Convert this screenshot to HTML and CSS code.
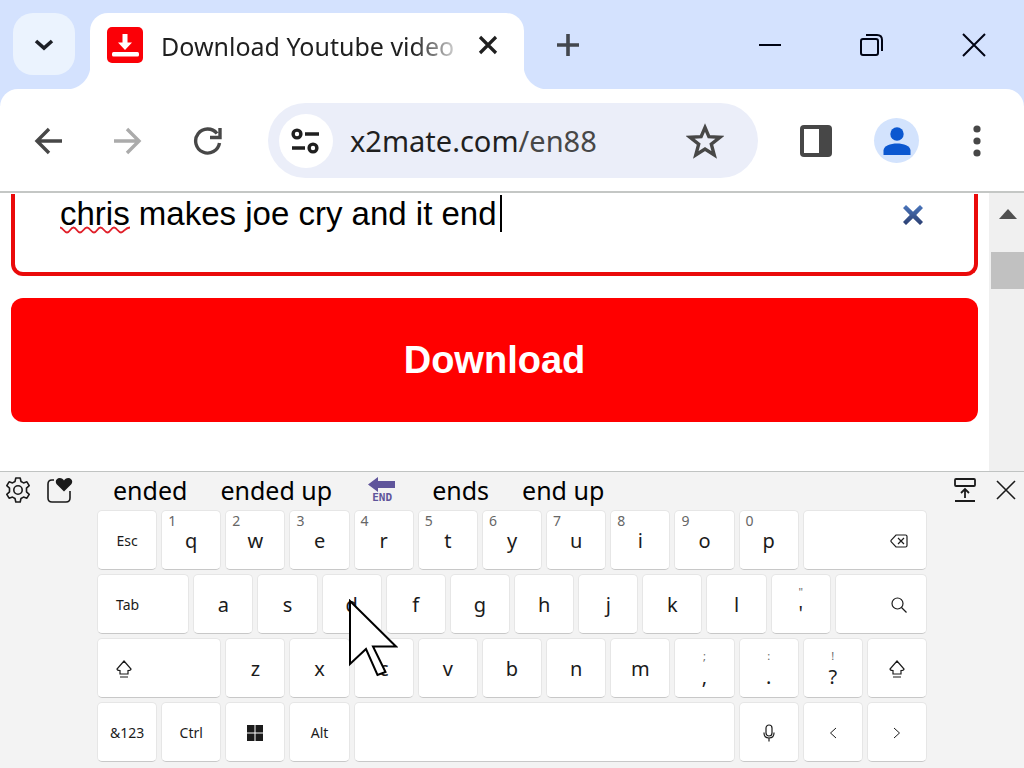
FILE: index.html
```html
<!DOCTYPE html>
<html lang="en">
<head>
<meta charset="utf-8">
<meta name="viewport" content="width=device-width, initial-scale=1">
<title>Download Youtube video</title>
<link rel="stylesheet" href="styles.css">
</head>
<body>
<div class="screen">
  <header class="tabstrip">
    <button class="tab-search" aria-label="Search tabs"><svg width="22" height="22" viewBox="0 0 22 22"><path d="M3 8l8 7 8-7" fill="none" stroke="#1c1f26" stroke-width="3.600"/></svg></button>
    <div class="tab">
      <svg class="favicon" width="36" height="36" viewBox="0 0 36 36"><rect width="36" height="36" rx="5" fill="#fb0007"/><path d="M15.500 7h5v8.500h4.500l-7 7.500-7-7.500h4.500z" fill="#fff"/><rect x="5" y="25" width="27" height="4.500" rx="1.500" fill="#fff"/></svg>
      <span class="tab-title">Download Youtube video</span>
      <button class="icon-btn" aria-label="Close tab"><svg width="20" height="20" viewBox="0 0 20 20"><path d="M2 2l16 16M18 2L2 18" stroke="#1f1f1f" stroke-width="3.200"/></svg></button>
    </div>
    <button class="icon-btn new-tab" aria-label="New tab"><svg width="24" height="24" viewBox="0 0 24 24"><path d="M12 1v22M1 12h22" stroke="#43474e" stroke-width="3.600"/></svg></button>
    <div class="window-controls">
      <button class="icon-btn" aria-label="Minimize"><svg width="24" height="24" viewBox="0 0 24 24"><path d="M1 12h22" stroke="#000414" stroke-width="2"/></svg></button>
      <button class="icon-btn" aria-label="Restore"><svg width="24" height="24" viewBox="0 0 24 24" fill="none" stroke="#000414" stroke-width="2"><rect x="1" y="6" width="17" height="16" rx="2"/><path d="M6 2h11q5 0 5 5v11"/></svg></button>
      <button class="icon-btn" aria-label="Close"><svg width="24" height="24" viewBox="0 0 24 24"><path d="M1 1l22 22M23 1L1 23" stroke="#000414" stroke-width="2"/></svg></button>
    </div>
  </header>

  <nav class="toolbar">
    <div class="nav-buttons">
      <button class="icon-btn" aria-label="Back"><svg width="30" height="28" viewBox="0 0 30 28"><path d="M29 14H4M16 2L4 14l12 12" fill="none" stroke="#474747" stroke-width="3.400"/></svg></button>
      <button class="icon-btn" aria-label="Forward"><svg width="30" height="28" viewBox="0 0 30 28"><path d="M1 14h25M14 2l12 12-12 12" fill="none" stroke="#ababab" stroke-width="3.400"/></svg></button>
      <button class="icon-btn" aria-label="Reload"><svg width="30" height="30" viewBox="0 0 30 30"><path d="M26.500 17a12 12 0 1 1-2.500-9.500M27 2v9.500h-10" fill="none" stroke="#474747" stroke-width="3.400"/></svg></button>
    </div>
    <div class="omnibox">
      <button class="site-info" aria-label="Site information"><svg width="30" height="28" viewBox="0 0 30 28" fill="none" stroke="#1f1f1f" stroke-width="3.400"><circle cx="6" cy="7" r="3.900"/><path d="M14 7h14M1 21h13"/><circle cx="22" cy="21" r="3.900"/></svg></button>
      <span class="url" role="textbox" aria-label="Address">x2mate.com<span class="url-path">/en88</span></span>
      <button class="icon-btn" aria-label="Bookmark"><svg width="38" height="38" viewBox="0 0 38 38"><path d="M19 5.500l3.900 9.200 11 .6-8.600 6.900 2.900 10.700L19 27l-9.200 5.900 2.900-10.700-8.600-6.900 11-.6z" fill="none" stroke="#474747" stroke-width="3.400"/></svg></button>
    </div>
    <div class="tool-actions">
      <button class="icon-btn" aria-label="Side panel"><svg width="32" height="32" viewBox="0 0 32 32"><rect width="32" height="32" rx="4" fill="#474747"/><path d="M4 4h15v24H4z" fill="#fff"/></svg></button>
      <button class="avatar" aria-label="Profile"><svg width="28" height="28" viewBox="0 0 28 28" fill="#0b57d0"><circle cx="14" cy="7" r="6.700"/><path d="M0.500 28v-4.500c0-4.500 7-7 13.500-7s13.500 2.500 13.500 7V28z"/></svg></button>
      <button class="icon-btn" aria-label="Menu"><svg width="8" height="32" viewBox="0 0 8 32" fill="#474747"><circle cx="4" cy="4" r="3.600"/><circle cx="4" cy="16" r="3.600"/><circle cx="4" cy="28" r="3.600"/></svg></button>
    </div>
  </nav>

  <div class="viewport">
    <main class="page">
      <div class="field">
        <input class="query" type="text" aria-label="Search or paste link" value="chris makes joe cry and it end" spellcheck="false">
        <svg class="squiggle" width="70" height="8" viewBox="0 0 70 8"><path d="M0 1.500C3 1.500 4 6.500 7 6.500S10.500 1.500 13.500 1.500 17 6.500 20 6.500 24 1.500 27 1.500 31 6.500 34 6.500 37.500 1.500 40.500 1.500 44.500 6.500 47.500 6.500 51 1.500 54 1.500 58 6.500 61 6.500 65 1.500 70 1.500" fill="none" stroke="#e0202a" stroke-width="1.800"/></svg>
        <span class="caret"></span>
        <button class="icon-btn" aria-label="Clear"><svg width="20" height="20" viewBox="0 0 20 20"><defs><linearGradient id="clear" x1="0" y1="0" x2="0" y2="1"><stop offset="0" stop-color="#4a76bd"/><stop offset="1" stop-color="#2b3e70"/></linearGradient></defs><path d="M3 0l7 6.800L17 0l3 3-6.800 7 6.800 7-3 3-7-6.800L3 20l-3-3 6.800-7L0 3z" fill="url(#clear)"/></svg></button>
      </div>
      <button class="download">Download</button>
    </main>
    <div class="scrollbar">
      <svg width="18" height="10" viewBox="0 0 18 10"><path d="M0 10L9 0l9 10z" fill="#505050"/></svg>
      <div class="thumb"></div>
    </div>
  </div>

  <section class="keyboard" aria-label="Touch keyboard">
    <div class="suggest-bar">
      <div class="kb-tools">
        <button class="icon-btn" aria-label="Settings"><svg width="26" height="26" viewBox="0 0 26 26" fill="none" stroke="#1b1b1b" stroke-width="1.600" stroke-linejoin="round"><path d="M10.800 1h4.400l.8 3.500 2.500 1.400 3.400-1.100 2.300 3.900-2.700 2.500v3.600l2.700 2.500-2.300 3.900-3.400-1.100-2.500 1.400-.8 3.500h-4.400L10 21.500l-2.500-1.400-3.400 1.100-2.300-3.900 2.700-2.500v-3.600L1.800 8.700l2.300-3.900 3.400 1.100L10 4.500z"/><circle cx="13" cy="13" r="4.200"/></svg></button>
        <button class="icon-btn" aria-label="Emoji and stickers"><svg width="26" height="26" viewBox="0 0 26 26"><path d="M7 3H5Q1 3 1 7v14q0 4 4 4h14q4 0 4-4v-7" fill="none" stroke="#1b1b1b" stroke-width="1.600"/><path d="M17 14.500L9.700 7.300C7.500 4.500 9.500 1 12.700 1c2 0 3.500 1 4.300 2.600C17.800 2 19.300 1 21.300 1c3.200 0 5.200 3.500 3 6.300z" fill="#1b1b1b"/></svg></button>
      </div>
      <div class="suggestions">
        <button class="word">ended</button>
        <button class="word">ended up</button>
        <button class="word end-emoji" aria-label="End arrow"><svg width="28" height="15" viewBox="0 0 28 15"><path d="M0 7.500L10 0v4h17v7H10v4z" fill="#5f559b"/></svg><span>END</span></button>
        <button class="word">ends</button>
        <button class="word">end up</button>
      </div>
      <div class="kb-window">
        <button class="icon-btn" aria-label="Dock keyboard"><svg width="22" height="24" viewBox="0 0 22 24" fill="none" stroke="#1b1b1b" stroke-width="1.800"><rect x="1" y="1" width="20" height="7" rx="1"/><path d="M11 20v-9M7 15l4-4 4 4M1 23h20"/></svg></button>
        <button class="icon-btn" aria-label="Close keyboard"><svg width="20" height="20" viewBox="0 0 20 20"><path d="M1 1l18 18M19 1L1 19" stroke="#1b1b1b" stroke-width="1.600"/></svg></button>
      </div>
    </div>

    <div class="keys">
      <button class="key small">Esc</button>
      <button class="key"><span class="alt">1</span>q</button>
      <button class="key"><span class="alt">2</span>w</button>
      <button class="key"><span class="alt">3</span>e</button>
      <button class="key"><span class="alt">4</span>r</button>
      <button class="key"><span class="alt">5</span>t</button>
      <button class="key"><span class="alt">6</span>y</button>
      <button class="key"><span class="alt">7</span>u</button>
      <button class="key"><span class="alt">8</span>i</button>
      <button class="key"><span class="alt">9</span>o</button>
      <button class="key"><span class="alt">0</span>p</button>
      <button class="key wide-4 right" aria-label="Backspace"><svg width="18" height="14" viewBox="0 0 18 14" fill="none" stroke="#1b1b1b" stroke-width="1.200"><path d="M6 1h9.500Q17 1 17 2.500v9q0 1.500-1.500 1.500H6L1 7.600V6.400zM8 4l6 6M14 4l-6 6"/></svg></button>

      <button class="key wide-3 small left">Tab</button>
      <button class="key">a</button>
      <button class="key">s</button>
      <button class="key">d</button>
      <button class="key">f</button>
      <button class="key">g</button>
      <button class="key">h</button>
      <button class="key">j</button>
      <button class="key">k</button>
      <button class="key">l</button>
      <button class="key stacked"><span class="upper">"</span><span>'</span></button>
      <button class="key wide-3 right" aria-label="Search"><svg width="18" height="16" viewBox="0 0 18 16" fill="none" stroke="#1b1b1b" stroke-width="1.200"><circle cx="7.500" cy="6.500" r="5.500"/><path d="M11.500 10.500l5 5"/></svg></button>

      <button class="key wide-4 left" aria-label="Shift"><svg width="16" height="18" viewBox="0 0 16 18" fill="none" stroke="#1b1b1b" stroke-width="1.200"><path d="M8 1l7 8q0 1.500-3 1.500V14H4v-3.500Q1 10.500 1 9zM4 17h8"/></svg></button>
      <button class="key">z</button>
      <button class="key">x</button>
      <button class="key">c</button>
      <button class="key">v</button>
      <button class="key">b</button>
      <button class="key">n</button>
      <button class="key">m</button>
      <button class="key stacked"><span class="upper">;</span><span>,</span></button>
      <button class="key stacked"><span class="upper">:</span><span>.</span></button>
      <button class="key stacked"><span class="upper">!</span><span>?</span></button>
      <button class="key" aria-label="Right shift"><svg width="16" height="18" viewBox="0 0 16 18" fill="none" stroke="#1b1b1b" stroke-width="1.200"><path d="M8 1l7 8q0 1.500-3 1.500V14H4v-3.500Q1 10.500 1 9zM4 17h8"/></svg></button>

      <button class="key small">&amp;123</button>
      <button class="key small">Ctrl</button>
      <button class="key" aria-label="Windows"><svg width="16" height="16" viewBox="0 0 16 16"><path d="M0 0h7.500v7.500H0zM8.500 0H16v7.500H8.500zM0 8.500h7.500V16H0zM8.500 8.500H16V16H8.500z" fill="#1b1b1b"/></svg></button>
      <button class="key small">Alt</button>
      <button class="key wide-12" aria-label="Space"></button>
      <button class="key" aria-label="Dictate"><svg width="12" height="18" viewBox="0 0 12 18" fill="none" stroke="#1b1b1b" stroke-width="1.200"><rect x="3" y="1" width="6" height="11" rx="3"/><path d="M1 8.500v.5q0 5 5 5t5-5v-.5M6 14v3.500"/></svg></button>
      <button class="key" aria-label="Left"><svg width="8" height="12" viewBox="0 0 8 12"><path d="M7 1L1.500 6 7 11" fill="none" stroke="#1b1b1b" stroke-width="1"/></svg></button>
      <button class="key" aria-label="Right"><svg width="8" height="12" viewBox="0 0 8 12"><path d="M1 1l5.500 5L1 11" fill="none" stroke="#1b1b1b" stroke-width="1"/></svg></button>
    </div>
  </section>

  <svg class="pointer" width="50" height="78" viewBox="0 0 50 78"><path d="M2 2v63l16-15L29.500 76l8-3L25 47.500h23z" fill="#fff" stroke="#000" stroke-width="2"/></svg>
</div>
</body>
</html>
```
FILE: styles.css
```css
* { box-sizing: border-box; }

body {
  margin: 0;
  background: #fff;
  font-family: "Noto Sans", "Open Sans", sans-serif;
  color: #1b1b1b;
}

button {
  margin: 0;
  padding: 0;
  border: 0;
  background: none;
  color: inherit;
  font: inherit;
}

svg { display: block; flex: none; }

.screen {
  position: relative;
  display: flex;
  flex-direction: column;
  min-height: 100vh;
  overflow: hidden;
}

.icon-btn { display: flex; align-items: center; justify-content: center; flex: none; }

/* Tab strip */
.tabstrip {
  display: flex;
  align-items: flex-start;
  height: 106px;
  margin-bottom: -17px;
  padding: 13px 38px 0 13px;
  background: #d4e2fe;
}

.tab-search {
  display: flex;
  align-items: center;
  justify-content: center;
  width: 62px;
  height: 62px;
  border-radius: 20px;
  background: #ebf3fe;
}

.tab {
  position: relative;
  display: flex;
  align-items: center;
  gap: 18px;
  width: 434px;
  height: 77px;
  margin-left: 15px;
  padding: 0 26px 14px 17px;
  border-radius: 18px 18px 0 0;
  background: #fff;
}

.tab::before,
.tab::after {
  content: "";
  position: absolute;
  bottom: 1px;
  width: 24px;
  height: 24px;
}

.tab::before { right: 100%; background: radial-gradient(circle at 0 0, transparent 24px, #fff 25px); }
.tab::after { left: 100%; background: radial-gradient(circle at 100% 0, transparent 24px, #fff 25px); }

.tab-title {
  flex: 1;
  overflow: hidden;
  padding-top: 2px;
  white-space: nowrap;
  font-size: 25px;
  line-height: 36px;
  color: #1f1f1f;
  mask-image: linear-gradient(to right, #000 84%, transparent 102%);
}

.new-tab { margin: 20px 0 0 32px; }

.window-controls { display: flex; gap: 78px; margin: 20px 0 0 auto; }

/* Toolbar */
.toolbar {
  display: flex;
  align-items: center;
  height: 104px;
  padding: 1px 43px 0 33px;
  border-bottom: 2px solid #c4c7c5;
  border-radius: 18px 18px 0 0;
  background: #fff;
}

.nav-buttons { display: flex; align-items: center; gap: 50px; }

.omnibox {
  display: flex;
  align-items: center;
  flex: 1;
  height: 75px;
  margin: 0 42px 0 45px;
  padding: 0 34px 0 11px;
  border-radius: 38px;
  background: #ebeef9;
}

.site-info {
  display: flex;
  align-items: center;
  justify-content: center;
  width: 54px;
  height: 54px;
  border-radius: 50%;
  background: #fff;
}

.url { flex: 1; margin-left: 17px; font-size: 29px; line-height: 38px; color: #1f1f1f; }
.url-path { color: #474747; }

.tool-actions { display: flex; align-items: center; gap: 42px; }

.tool-actions .icon-btn:last-child { margin-left: 12px; }

.avatar {
  display: flex;
  align-items: center;
  justify-content: center;
  width: 45px;
  height: 45px;
  border-radius: 50%;
  background: #d3e3fd;
}

/* Web page */
.viewport { display: flex; flex: 1; }

.page { flex: 1; padding: 1px 11px 49px; }

.field {
  position: relative;
  display: flex;
  align-items: flex-start;
  height: 82px;
  padding: 0 51px 0 45px;
  border: solid #ea0a0a;
  border-width: 0 4px 4px;
  border-radius: 0 0 12px 12px;
}

.query {
  flex: 1;
  min-width: 0;
  height: 40px;
  padding: 0;
  border: 0;
  outline: 0;
  background: none;
  color: #000;
  font: 33px "Liberation Sans", Arial, sans-serif;
}

.field .icon-btn { margin-top: 11px; }

.squiggle { position: absolute; top: 32px; left: 45px; }

.caret { position: absolute; top: 1px; left: 485px; width: 2px; height: 37px; background: #000; }

.download {
  display: block;
  width: 100%;
  height: 124px;
  margin-top: 22px;
  border-radius: 12px;
  background: #f00;
  color: #fff;
  font: bold 38px "Liberation Sans", Arial, sans-serif;
}

.scrollbar {
  display: flex;
  flex-direction: column;
  align-items: center;
  width: 35px;
  padding: 16px 0 0 2px;
  background: #f0f0f0;
}

.thumb { width: 100%; height: 37px; margin-top: 33px; background: #c1c1c1; }

/* Touch keyboard */
.keyboard {
  padding-bottom: 6px;
  border-top: 1px solid #c0c3c2;
  background: #f3f3f3;
}

.suggest-bar { display: flex; height: 38px; padding: 0 8px 2px 5px; }

.kb-tools, .kb-window { display: flex; align-items: center; }
.kb-tools { width: 108px; gap: 16px; }
.kb-window { gap: 20px; }

.suggestions { display: flex; align-items: center; flex: 1; gap: 33px; }

.word { font-size: 25px; line-height: 36px; color: #000; }

.end-emoji {
  display: flex;
  flex-direction: column;
  align-items: center;
  margin: 0 3px;
  font: bold 11px "DejaVu Sans Mono", monospace;
  line-height: 12px;
  color: #5f559b;
}

.keys {
  display: grid;
  grid-template-columns: repeat(26, 1fr);
  grid-auto-rows: 60px;
  gap: 4px;
  padding: 0 97px;
}

.key {
  position: relative;
  display: flex;
  align-items: center;
  justify-content: center;
  grid-column: span 2;
  min-width: 0;
  padding-top: 1px;
  border: 1px solid #e6e6e6;
  border-bottom-color: #c8c8c8;
  border-radius: 5px;
  background: #fff;
  font-size: 20px;
  line-height: 24px;
}

.wide-3 { grid-column: span 3; }
.wide-4 { grid-column: span 4; }
.wide-12 { grid-column: span 12; }
.left { justify-content: flex-start; padding-left: 18px; }
.right { justify-content: flex-end; padding-right: 18px; }
.small { font-size: 14px; }

.alt { position: absolute; top: 2px; left: 6px; font-size: 14px; line-height: 16px; color: #666; }

.stacked { flex-direction: column; padding-top: 0; }
.upper { font-size: 11px; line-height: 18px; color: #666; }

.pointer { position: absolute; left: 348px; top: 599px; }
```
